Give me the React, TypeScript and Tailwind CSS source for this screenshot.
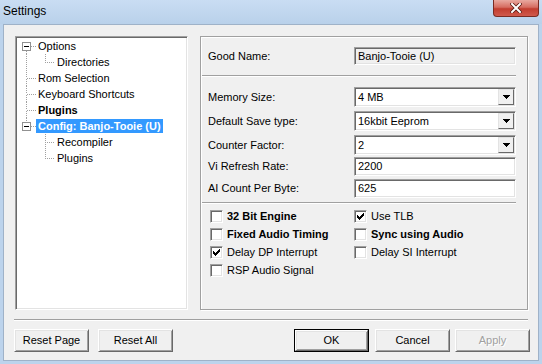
import React from "react";

const sunken =
  "border border-t-[#a0a0a0] border-l-[#a0a0a0] border-r-white border-b-white shadow-[inset_1px_1px_0_#696969,inset_-1px_-1px_0_#e3e3e3]";
const raised =
  "border border-t-white border-l-white border-r-[#696969] border-b-[#696969] shadow-[inset_1px_1px_0_#e3e3e3,inset_-1px_-1px_0_#a0a0a0]";

function RootGutter({ box, up, down }: { box?: boolean; up: boolean; down: boolean }) {
  return (
    <svg width="19" height="16" className="shrink-0" shapeRendering="crispEdges">
      {up && <line x1="9.5" y1="0" x2="9.5" y2={box ? 4 : 8} stroke="#a0a0a0" strokeDasharray="1 1" />}
      {down && <line x1="9.5" y1={box ? 13 : 9} x2="9.5" y2="16" stroke="#a0a0a0" strokeDasharray="1 1" />}
      <line x1={box ? 14 : 10} y1="8.5" x2="19" y2="8.5" stroke="#a0a0a0" strokeDasharray="1 1" />
      {box && (
        <>
          <rect x="5.5" y="4.5" width="8" height="8" fill="white" stroke="#919191" />
          <line x1="7" y1="8.5" x2="12" y2="8.5" stroke="#000" />
        </>
      )}
    </svg>
  );
}

function ChildGutter({ parentCont, last }: { parentCont: boolean; last: boolean }) {
  return (
    <svg width="38" height="16" className="shrink-0" shapeRendering="crispEdges">
      {parentCont && <line x1="9.5" y1="0" x2="9.5" y2="16" stroke="#a0a0a0" strokeDasharray="1 1" />}
      <line x1="28.5" y1="0" x2="28.5" y2={last ? 9 : 16} stroke="#a0a0a0" strokeDasharray="1 1" />
      <line x1="30" y1="8.5" x2="38" y2="8.5" stroke="#a0a0a0" strokeDasharray="1 1" />
    </svg>
  );
}

function TreeLabel({ text, bold, selected }: { text: string; bold?: boolean; selected?: boolean }) {
  return (
    <span
      className={
        "px-[2px] h-[14px] leading-[14px] whitespace-nowrap " +
        (bold ? "font-bold " : "") +
        (selected ? "bg-[#3399ff] text-white" : "")
      }
    >
      {text}
    </span>
  );
}

function Tree() {
  return (
    <div className={"w-[173px] h-[274px] bg-white pt-[1px] pl-[1px] " + sunken}>
      <div className="flex items-center h-[16px]">
        <RootGutter box up={false} down />
        <TreeLabel text="Options" />
      </div>
      <div className="flex items-center h-[16px]">
        <ChildGutter parentCont last />
        <TreeLabel text="Directories" />
      </div>
      <div className="flex items-center h-[16px]">
        <RootGutter up down />
        <TreeLabel text="Rom Selection" />
      </div>
      <div className="flex items-center h-[16px]">
        <RootGutter up down />
        <TreeLabel text="Keyboard Shortcuts" />
      </div>
      <div className="flex items-center h-[16px]">
        <RootGutter up down />
        <TreeLabel text="Plugins" bold />
      </div>
      <div className="flex items-center h-[16px]">
        <RootGutter box up down={false} />
        <TreeLabel text="Config: Banjo-Tooie (U)" bold selected />
      </div>
      <div className="flex items-center h-[16px]">
        <ChildGutter parentCont={false} last={false} />
        <TreeLabel text="Recompiler" />
      </div>
      <div className="flex items-center h-[16px]">
        <ChildGutter parentCont={false} last />
        <TreeLabel text="Plugins" />
      </div>
    </div>
  );
}

function Combo({ value }: { value: string }) {
  return (
    <div className={"w-[162px] h-[20px] bg-white flex p-[1px] " + sunken}>
      <div className="flex-1 pl-[2px] flex items-center">{value}</div>
      <div className={"w-[16px] h-[16px] bg-[#f0f0f0] flex items-center justify-center " + raised.replace("border-t-white border-l-white", "border-t-[#e3e3e3] border-l-[#e3e3e3]").replace("inset_1px_1px_0_#e3e3e3", "inset_1px_1px_0_#fff")}>
        <svg width="7" height="4" shapeRendering="crispEdges">
          <polygon points="0,0 7,0 3.5,4" fill="#000" />
        </svg>
      </div>
    </div>
  );
}

function Edit({ value, h = 19, bg = "bg-white" }: { value: string; h?: number; bg?: string }) {
  return (
    <div
      className={"w-[162px] pl-[3px] flex items-center " + bg + " " + sunken}
      style={{ height: h }}
    >
      {value}
    </div>
  );
}

function FieldRow({ label, children, mt }: { label: string; children: React.ReactNode; mt: string }) {
  return (
    <div className={"flex items-center ml-[7px] " + mt}>
      <div className="w-[146px]">{label}</div>
      {children}
    </div>
  );
}

function Check({ label, checked, bold }: { label: string; checked?: boolean; bold?: boolean }) {
  return (
    <div className="flex items-center h-[18px]">
      <div className={"w-[13px] h-[13px] bg-white flex items-center justify-center shrink-0 " + sunken}>
        {checked && (
          <svg width="7" height="7" shapeRendering="crispEdges">
            <polygon points="0,2 2,4 7,-1 7,2 2,7 0,5" fill="#000" />
          </svg>
        )}
      </div>
      <span className={"ml-[4px] whitespace-nowrap " + (bold ? "font-bold" : "")}>{label}</span>
    </div>
  );
}

function Separator({ className }: { className: string }) {
  return <div className={"h-[2px] border-t border-t-[#a0a0a0] border-b border-b-white " + className} />;
}

function Panel() {
  return (
    <div className="w-[328px] h-[274px] border border-[#a0a0a0] shadow-[inset_1px_1px_0_#fff,1px_1px_0_#fff] flex flex-col">
      <FieldRow label="Good Name:" mt="mt-[10px]">
        <Edit value="Banjo-Tooie (U)" h={18} bg="bg-[#f0f0f0]" />
      </FieldRow>
      <Separator className="mt-[10px] ml-[1px] w-[314px]" />
      <FieldRow label="Memory Size:" mt="mt-[10px]">
        <Combo value="4 MB" />
      </FieldRow>
      <FieldRow label="Default Save type:" mt="mt-[4px]">
        <Combo value="16kbit Eeprom" />
      </FieldRow>
      <FieldRow label="Counter Factor:" mt="mt-[4px]">
        <Combo value="2" />
      </FieldRow>
      <FieldRow label="Vi Refresh Rate:" mt="mt-[2px]">
        <Edit value="2200" />
      </FieldRow>
      <FieldRow label="AI Count Per Byte:" mt="mt-[3px]">
        <Edit value="625" />
      </FieldRow>
      <Separator className="mt-[4px] ml-[1px] w-[314px]" />
      <div className="mt-[3px] ml-[9px] grid grid-cols-[144px_1fr]">
        <Check label="32 Bit Engine" bold />
        <Check label="Use TLB" checked />
        <Check label="Fixed Audio Timing" bold />
        <Check label="Sync using Audio" bold />
        <Check label="Delay DP Interrupt" checked />
        <Check label="Delay SI Interrupt" />
        <Check label="RSP Audio Signal" />
      </div>
    </div>
  );
}

function Button({ label, disabled, isDefault, className = "" }: { label: string; disabled?: boolean; isDefault?: boolean; className?: string }) {
  const face = (
    <div
      className={
        "w-full h-full bg-[#f0f0f0] flex items-center justify-center " +
        raised +
        (disabled ? " text-[#a0a0a0] [text-shadow:1px_1px_0_#fff]" : "")
      }
    >
      {label}
    </div>
  );
  return (
    <div className={"w-[75px] h-[23px] " + (isDefault ? "border border-black " : "") + className}>{face}</div>
  );
}

export default function App() {
  return (
    <div className="w-[542px] h-[364px] flex flex-col bg-[#bcd3ec] font-['Liberation_Sans',Arial,sans-serif] text-[11px] text-black overflow-hidden">
      <div className="h-[24px] shrink-0 flex items-start justify-between bg-gradient-to-b from-[#c9ddf3] to-[#b9d1ea]">
        <div className="pl-[3px] h-[22px] flex items-center text-[12px]">Settings</div>
        <div className="w-[46px] h-[17px] mr-[3px] rounded-b-[4px] border border-t-0 border-[#7a2b22] bg-[linear-gradient(#e9a9a0,#d66d61_45%,#c23d2f_55%,#d0594c)] flex items-center justify-center">
          <svg width="12" height="10">
            <path d="M2 1 L10 9 M10 1 L2 9" stroke="#5a1a12" strokeWidth="3.6" strokeLinecap="square" />
            <path d="M2 1 L10 9 M10 1 L2 9" stroke="#fff" strokeWidth="2" strokeLinecap="square" />
          </svg>
        </div>
      </div>
      <div className="mx-[3px] mb-[3px] flex-1 bg-[#f0f0f0] border border-[#9fb2c8] flex flex-col">
        <div className="mt-[11px] ml-[11px] flex gap-[12px]">
          <Tree />
          <Panel />
        </div>
        <Separator className="mt-[9px] ml-[10px] w-[514px]" />
        <div className="mt-[8px] ml-[10px] flex">
          <Button label="Reset Page" />
          <Button label="Reset All" className="ml-[9px]" />
          <Button label="OK" isDefault className="ml-[121px]" />
          <Button label="Cancel" className="ml-[6px]" />
          <Button label="Apply" disabled className="ml-[5px]" />
        </div>
      </div>
    </div>
  );
}
